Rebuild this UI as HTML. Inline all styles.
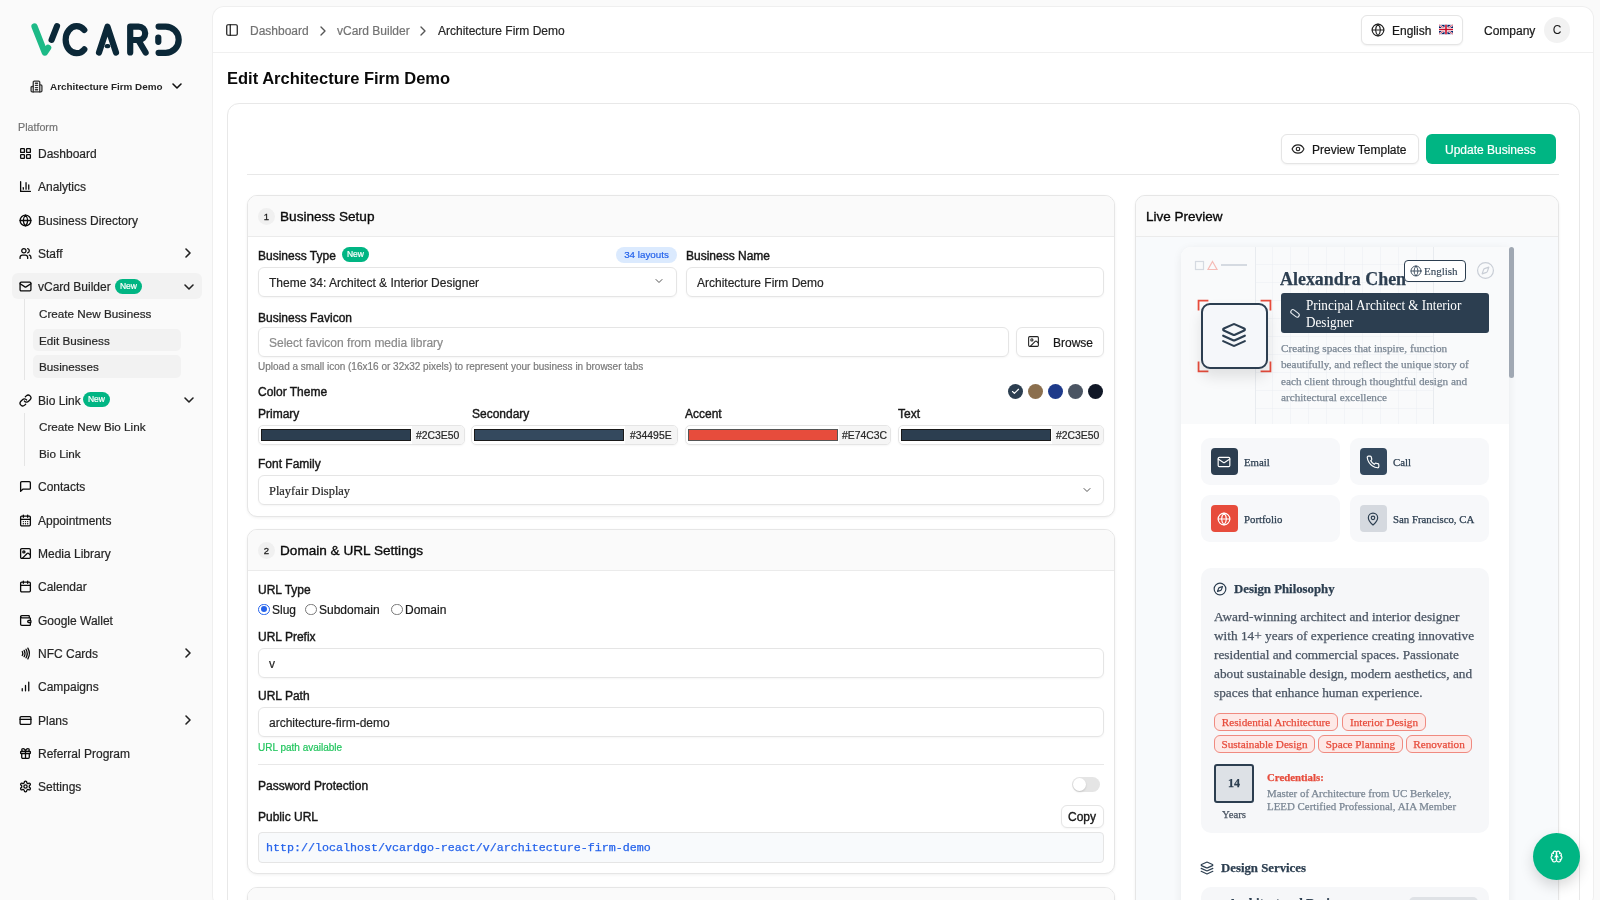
<!DOCTYPE html>
<html><head><meta charset="utf-8">
<style>
*{box-sizing:border-box;margin:0;padding:0}
html,body{width:1600px;height:900px;overflow:hidden;background:#fafafa;-webkit-font-smoothing:antialiased;font-family:"Liberation Sans",sans-serif;color:#0a0a0a}
.a{position:absolute}
.t{position:absolute;white-space:nowrap;line-height:20px;margin-top:1px;-webkit-text-stroke:0.2px currentColor}
svg.i{position:absolute;fill:none;stroke:currentColor;stroke-width:2;stroke-linecap:round;stroke-linejoin:round}
.side .t{font-size:12px;color:#262626;margin-top:1px}
.side svg.i{margin-top:0.2px;stroke-width:2.4}
.badge{position:absolute;background:#00b583;color:#fff;border-radius:8px;font-size:8.5px;line-height:15px;text-align:center;height:15px;-webkit-text-stroke:0.2px #fff}
.lbl{position:absolute;white-space:nowrap;line-height:20px;margin-top:1px;font-size:12px;color:#171717;-webkit-text-stroke:0.4px #171717}
.box{position:absolute;border:1px solid #e5e5e5;border-radius:6px;background:#fff;box-shadow:0 1px 2px rgba(0,0,0,.04)}
.sec{position:absolute;border:1px solid #e6e6e6;border-radius:10px;background:#fff;box-shadow:0 1px 3px rgba(0,0,0,.06);overflow:hidden}
.sech{position:absolute;left:0;top:0;right:0;background:#fafafa;border-bottom:1px solid #ebebeb}
.num{position:absolute;width:17px;height:17px;border-radius:9px;background:#f0f0f0;font-size:9.5px;line-height:17px;text-align:center;color:#222;-webkit-text-stroke:0.3px #222}
.sf{position:absolute;white-space:nowrap;font-family:"Liberation Serif",serif;-webkit-text-stroke:0.25px currentColor}
.cc{position:absolute;width:139px;height:47px;border-radius:9px;background:#f7f8fa}
.ci{position:absolute;width:26.5px;height:27px;border-radius:4px}
.tag{position:absolute;height:18px;border:1px solid #f08a80;border-radius:6px;background:#fde9e7;color:#e74c3c;font-family:"Liberation Serif",serif;font-size:11.2px;line-height:16px;text-align:center;white-space:nowrap;-webkit-text-stroke:0.25px currentColor}
</style></head><body>
<div style="position:absolute;left:0;top:0;width:1600px;height:900px;will-change:transform">
<!-- SIDEBAR -->
<div class="side">
  <svg class="a" style="left:28px;top:20px" width="158" height="40" viewBox="28 20 158 40">
    <g fill="none" stroke-linecap="round" stroke-linejoin="round" stroke-width="6.2">
      <path d="M34.5 26.5 L44.8 52.6 L48.2 47.8" stroke="#1dba87"/>
      <path d="M57 26.2 L51.6 39.8" stroke="#0b2838"/>
      <path d="M84.3 30 A11 13.5 0 1 0 84.3 49.4" stroke="#0b2838"/>
      <path d="M99 52.5 L107.5 26.8 L116 52.5" stroke="#0b2838"/>
      <path d="M106.8 46.2 H108.2" stroke="#0b2838" stroke-width="4.2"/>
      <path d="M130.2 52.5 V26.6 H138.5 A6.7 6.7 0 0 1 138.5 40 H133 M138.5 40.5 L145.6 52.5" stroke="#0b2838"/>
      <path d="M158.6 26.6 H165.7 A13 13.1 0 0 1 165.7 52.8 H158.6" stroke="#0b2838"/>
      <path d="M158.3 37.6 V41.8" stroke="#0b2838"/>
    </g>
  </svg>

  <svg class="i" style="left:30px;top:80px;color:#333;margin-top:0" width="13" height="13" viewBox="0 0 24 24"><path d="M6 22V4a2 2 0 0 1 2-2h8a2 2 0 0 1 2 2v18Z"/><path d="M6 12H4a2 2 0 0 0-2 2v6a2 2 0 0 0 2 2h2"/><path d="M18 9h2a2 2 0 0 1 2 2v9a2 2 0 0 1-2 2h-2"/><path d="M10 6h4M10 10h4M10 14h4M10 18h4"/></svg>
  <div class="t" style="left:50px;top:76px;font-size:9.9px;font-weight:700;color:#262626;-webkit-text-stroke:0">Architecture Firm Demo</div>
  <svg class="i" style="left:169px;top:77.8px;color:#111" width="16" height="16" viewBox="0 0 24 24"><path d="m6 9 6 6 6-6"/></svg>
  <div class="t" style="left:18px;top:116px;font-size:10.7px;color:#737373">Platform</div>

  <svg class="i" style="left:18.5px;top:147px" width="13" height="13" viewBox="0 0 24 24"><rect x="3" y="3" width="7" height="7" rx="1"/><rect x="14" y="3" width="7" height="7" rx="1"/><rect x="14" y="14" width="7" height="7" rx="1"/><rect x="3" y="14" width="7" height="7" rx="1"/></svg>
  <div class="t" style="left:38px;top:143px">Dashboard</div>

  <svg class="i" style="left:18.5px;top:180px" width="13" height="13" viewBox="0 0 24 24"><path d="M3 3v18h18"/><path d="M18 17V9"/><path d="M13 17V5"/><path d="M8 17v-3"/></svg>
  <div class="t" style="left:38px;top:176px">Analytics</div>

  <svg class="i" style="left:18.5px;top:214px" width="13" height="13" viewBox="0 0 24 24"><circle cx="12" cy="12" r="10"/><path d="M12 2a14.5 14.5 0 0 0 0 20 14.5 14.5 0 0 0 0-20"/><path d="M2 12h20"/></svg>
  <div class="t" style="left:38px;top:210px">Business Directory</div>

  <svg class="i" style="left:18.5px;top:247px" width="13" height="13" viewBox="0 0 24 24"><path d="M16 21v-2a4 4 0 0 0-4-4H6a4 4 0 0 0-4 4v2"/><circle cx="9" cy="7" r="4"/><path d="M22 21v-2a4 4 0 0 0-3-3.87"/><path d="M16 3.13a4 4 0 0 1 0 7.75"/></svg>
  <div class="t" style="left:38px;top:243px">Staff</div>
  <svg class="i" style="left:179.5px;top:245.3px;color:#222" width="16" height="16" viewBox="0 0 24 24"><path d="m9 18 6-6-6-6"/></svg>

  <div class="a" style="left:12px;top:273px;width:190px;height:26px;border-radius:6px;background:#f2f2f2"></div>
  <svg class="i" style="left:18.5px;top:280px" width="13" height="13" viewBox="0 0 24 24"><rect x="2" y="4" width="20" height="16" rx="2"/><path d="m22 7-8.97 5.7a1.94 1.94 0 0 1-2.06 0L2 7"/></svg>
  <div class="t" style="left:38px;top:276px">vCard Builder</div>
  <div class="badge" style="left:115px;top:279px;width:27px">New</div>
  <svg class="i" style="left:180.5px;top:278.8px;color:#222" width="16" height="16" viewBox="0 0 24 24"><path d="m6 9 6 6 6-6"/></svg>
  <div class="a" style="left:24px;top:299px;width:1px;height:81px;background:#e5e5e5"></div>
  <div class="t" style="left:39px;top:303px;font-size:11.7px">Create New Business</div>
  <div class="a" style="left:33px;top:329px;width:148px;height:22px;border-radius:5px;background:#f2f2f2"></div>
  <div class="t" style="left:39px;top:330px;font-size:11.7px">Edit Business</div>
  <div class="a" style="left:33px;top:355px;width:148px;height:23px;border-radius:5px;background:#f2f2f2"></div>
  <div class="t" style="left:39px;top:356px;font-size:11.7px">Businesses</div>

  <svg class="i" style="left:18.5px;top:394px" width="13" height="13" viewBox="0 0 24 24"><path d="M10 13a5 5 0 0 0 7.54.54l3-3a5 5 0 0 0-7.07-7.07l-1.72 1.71"/><path d="M14 11a5 5 0 0 0-7.54-.54l-3 3a5 5 0 0 0 7.07 7.07l1.71-1.71"/></svg>
  <div class="t" style="left:38px;top:390px">Bio Link</div>
  <div class="badge" style="left:83px;top:392px;width:27px">New</div>
  <svg class="i" style="left:180.5px;top:391.8px;color:#222" width="16" height="16" viewBox="0 0 24 24"><path d="m6 9 6 6 6-6"/></svg>
  <div class="a" style="left:24px;top:413px;width:1px;height:53px;background:#e5e5e5"></div>
  <div class="t" style="left:39px;top:416px;font-size:11.7px">Create New Bio Link</div>
  <div class="t" style="left:39px;top:443px;font-size:11.7px">Bio Link</div>

  <svg class="i" style="left:18.5px;top:480px" width="13" height="13" viewBox="0 0 24 24"><path d="M21 15a2 2 0 0 1-2 2H7l-4 4V5a2 2 0 0 1 2-2h14a2 2 0 0 1 2 2z"/></svg>
  <div class="t" style="left:38px;top:476px">Contacts</div>

  <svg class="i" style="left:18.5px;top:514px" width="13" height="13" viewBox="0 0 24 24"><rect x="3" y="4" width="18" height="18" rx="2"/><path d="M16 2v4M8 2v4M3 10h18M8 14h.01M12 14h.01M16 14h.01M8 18h.01M12 18h.01M16 18h.01"/></svg>
  <div class="t" style="left:38px;top:510px">Appointments</div>

  <svg class="i" style="left:18.5px;top:547px" width="13" height="13" viewBox="0 0 24 24"><rect x="3" y="3" width="18" height="18" rx="2"/><circle cx="9" cy="9" r="2"/><path d="m21 15-3.086-3.086a2 2 0 0 0-2.828 0L6 21"/></svg>
  <div class="t" style="left:38px;top:543px">Media Library</div>

  <svg class="i" style="left:18.5px;top:580px" width="13" height="13" viewBox="0 0 24 24"><rect x="3" y="4" width="18" height="18" rx="2"/><path d="M16 2v4M8 2v4M3 10h18"/></svg>
  <div class="t" style="left:38px;top:576px">Calendar</div>

  <svg class="i" style="left:18.5px;top:614px" width="13" height="13" viewBox="0 0 24 24"><path d="M19 7V4a1 1 0 0 0-1-1H5a2 2 0 0 0 0 4h15a1 1 0 0 1 1 1v4h-3a2 2 0 0 0 0 4h3a1 1 0 0 0 1-1v-2a1 1 0 0 0-1-1"/><path d="M3 5v14a2 2 0 0 0 2 2h15a1 1 0 0 0 1-1v-4"/></svg>
  <div class="t" style="left:38px;top:610px">Google Wallet</div>

  <svg class="i" style="left:18.5px;top:647px" width="13" height="13" viewBox="0 0 24 24"><path d="M6 8.32a7.43 7.43 0 0 1 0 7.36"/><path d="M9.46 6.21a11.76 11.76 0 0 1 0 11.58"/><path d="M12.91 4.1a15.91 15.91 0 0 1 .01 15.8"/><path d="M16.37 2a20.16 20.16 0 0 1 0 20"/></svg>
  <div class="t" style="left:38px;top:643px">NFC Cards</div>
  <svg class="i" style="left:179.5px;top:645.3px;color:#222" width="16" height="16" viewBox="0 0 24 24"><path d="m9 18 6-6-6-6"/></svg>

  <svg class="i" style="left:18.5px;top:680px" width="13" height="13" viewBox="0 0 24 24"><path d="M6 20v-4M12 20V10M18 20V4"/></svg>
  <div class="t" style="left:38px;top:676px">Campaigns</div>

  <svg class="i" style="left:18.5px;top:714px" width="13" height="13" viewBox="0 0 24 24"><rect x="2" y="5" width="20" height="14" rx="2"/><path d="M2 10h20"/></svg>
  <div class="t" style="left:38px;top:710px">Plans</div>
  <svg class="i" style="left:179.5px;top:712.3px;color:#222" width="16" height="16" viewBox="0 0 24 24"><path d="m9 18 6-6-6-6"/></svg>

  <svg class="i" style="left:18.5px;top:747px" width="13" height="13" viewBox="0 0 24 24"><rect x="3" y="8" width="18" height="4" rx="1"/><path d="M12 8v13"/><path d="M19 12v7a2 2 0 0 1-2 2H7a2 2 0 0 1-2-2v-7"/><path d="M7.5 8a2.5 2.5 0 0 1 0-5A4.8 8 0 0 1 12 8a4.8 8 0 0 1 4.5-5 2.5 2.5 0 0 1 0 5"/></svg>
  <div class="t" style="left:38px;top:743px">Referral Program</div>

  <svg class="i" style="left:18.5px;top:780px" width="13" height="13" viewBox="0 0 24 24"><path d="M12.22 2h-.44a2 2 0 0 0-2 2v.18a2 2 0 0 1-1 1.73l-.43.25a2 2 0 0 1-2 0l-.15-.08a2 2 0 0 0-2.73.73l-.22.38a2 2 0 0 0 .73 2.73l.15.1a2 2 0 0 1 1 1.72v.51a2 2 0 0 1-1 1.74l-.15.09a2 2 0 0 0-.73 2.73l.22.38a2 2 0 0 0 2.73.73l.15-.08a2 2 0 0 1 2 0l.43.25a2 2 0 0 1 1 1.73V20a2 2 0 0 0 2 2h.44a2 2 0 0 0 2-2v-.18a2 2 0 0 1 1-1.73l.43-.25a2 2 0 0 1 2 0l.15.08a2 2 0 0 0 2.73-.73l.22-.39a2 2 0 0 0-.73-2.73l-.15-.08a2 2 0 0 1-1-1.74v-.5a2 2 0 0 1 1-1.74l.15-.09a2 2 0 0 0 .73-2.73l-.22-.38a2 2 0 0 0-2.73-.73l-.15.08a2 2 0 0 1-2 0l-.43-.25a2 2 0 0 1-1-1.73V4a2 2 0 0 0-2-2z"/><circle cx="12" cy="12" r="3"/></svg>
  <div class="t" style="left:38px;top:776px">Settings</div>
</div>

<!-- MAIN PANEL -->
<div class="a" style="left:213px;top:7px;width:1380px;height:900px;background:#fff;border-radius:11px;box-shadow:0 0 0 1px #efefef,0 1px 2px rgba(0,0,0,.04)"></div>
<div class="a" style="left:213px;top:52px;width:1380px;height:1px;background:#f0f0f0"></div>
<svg class="i" style="left:224.5px;top:23px;color:#111" width="14" height="14" viewBox="0 0 24 24"><rect x="3" y="3" width="18" height="18" rx="2"/><path d="M9 3v18"/></svg>
<div class="t" style="left:250px;top:20px;font-size:12px;color:#737373">Dashboard</div>
<svg class="i" style="left:315px;top:22.5px;color:#555" width="16" height="16" viewBox="0 0 24 24"><path d="m9 18 6-6-6-6"/></svg>
<div class="t" style="left:337px;top:20px;font-size:12px;color:#737373">vCard Builder</div>
<svg class="i" style="left:415px;top:22.5px;color:#555" width="16" height="16" viewBox="0 0 24 24"><path d="m9 18 6-6-6-6"/></svg>
<div class="t" style="left:438px;top:20px;font-size:12px;color:#262626">Architecture Firm Demo</div>

<div class="a" style="left:1361px;top:15px;width:102px;height:30px;border:1px solid #e5e5e5;border-radius:6px;background:#fff;box-shadow:0 1px 2px rgba(0,0,0,.06)"></div>
<svg class="i" style="left:1371px;top:23px;color:#222" width="14" height="14" viewBox="0 0 24 24"><circle cx="12" cy="12" r="10"/><path d="M12 2a14.5 14.5 0 0 0 0 20 14.5 14.5 0 0 0 0-20"/><path d="M2 12h20"/></svg>
<div class="t" style="left:1392px;top:20px;font-size:12px;color:#171717">English</div>
<svg class="a" style="left:1439px;top:24px" width="14" height="11" viewBox="0 0 60 40"><rect width="60" height="40" fill="#012169"/><path d="M0 0L60 40M60 0L0 40" stroke="#fff" stroke-width="8"/><path d="M0 0L60 40M60 0L0 40" stroke="#C8102E" stroke-width="3"/><path d="M30 0V40M0 20H60" stroke="#fff" stroke-width="12"/><path d="M30 0V40M0 20H60" stroke="#C8102E" stroke-width="7"/></svg>
<div class="t" style="left:1484px;top:20px;font-size:12px;color:#171717">Company</div>
<div class="a" style="left:1544px;top:17px;width:26px;height:26px;border-radius:13px;background:#f2f2f2;font-size:12px;line-height:26px;text-align:center;color:#171717">C</div>

<div class="t" style="left:227px;top:65px;font-size:16.5px;font-weight:700;line-height:24px;color:#0a0a0a;-webkit-text-stroke:0">Edit Architecture Firm Demo</div>

<!-- OUTER CARD -->
<div class="a" style="left:227px;top:103px;width:1353px;height:820px;border:1px solid #e8e8e8;border-radius:12px;background:#fff"></div>
<div class="a" style="left:1281px;top:134px;width:138px;height:30px;border:1px solid #e5e5e5;border-radius:6px;background:#fff;box-shadow:0 1px 2px rgba(0,0,0,.05)"></div>
<svg class="i" style="left:1291px;top:142px;color:#222" width="14" height="14" viewBox="0 0 24 24"><path d="M2.062 12.348a1 1 0 0 1 0-.696 10.75 10.75 0 0 1 19.876 0 1 1 0 0 1 0 .696 10.75 10.75 0 0 1-19.876 0"/><circle cx="12" cy="12" r="3"/></svg>
<div class="t" style="left:1312px;top:139px;font-size:12px;color:#171717">Preview Template</div>
<div class="a" style="left:1426px;top:134px;width:130px;height:30px;border-radius:6px;background:#00b583"></div>
<div class="t" style="left:1445px;top:139px;font-size:12px;color:#fff">Update Business</div>
<div class="a" style="left:247px;top:174px;width:1312px;height:1px;background:#e8e8e8"></div>

<!-- SECTION 1 -->
<div class="sec" style="left:247px;top:195px;width:868px;height:322px"><div class="sech" style="height:41px"></div></div>
<div class="num" style="left:258px;top:208px">1</div>
<div class="t" style="left:280px;top:206px;font-size:13.6px;color:#0a0a0a;-webkit-text-stroke:0.35px #0a0a0a">Business Setup</div>

<div class="lbl" style="left:258px;top:245px">Business Type</div>
<div class="badge" style="left:342px;top:247px;width:27px">New</div>
<div class="a" style="left:616px;top:247px;width:61px;height:16px;border-radius:8px;background:#dbeafe;color:#2563eb;font-size:9.8px;line-height:16px;text-align:center;-webkit-text-stroke:0.2px #2563eb">34 layouts</div>
<div class="box" style="left:258px;top:267px;width:419px;height:30px"></div>
<div class="t" style="left:269px;top:272px;font-size:12px;color:#262626">Theme 34: Architect &amp; Interior Designer</div>
<svg class="i" style="left:653px;top:275px;color:#555" width="12" height="12" viewBox="0 0 24 24"><path d="m6 9 6 6 6-6"/></svg>

<div class="lbl" style="left:686px;top:245px">Business Name</div>
<div class="box" style="left:686px;top:267px;width:418px;height:30px"></div>
<div class="t" style="left:697px;top:272px;font-size:12px;color:#262626">Architecture Firm Demo</div>

<div class="lbl" style="left:258px;top:307px">Business Favicon</div>
<div class="box" style="left:258px;top:327px;width:751px;height:30px"></div>
<div class="t" style="left:269px;top:332px;font-size:12px;color:#8a8a8a">Select favicon from media library</div>
<div class="box" style="left:1016px;top:327px;width:88px;height:30px"></div>
<svg class="i" style="left:1027px;top:335px;color:#222" width="13" height="13" viewBox="0 0 24 24"><rect x="3" y="3" width="18" height="18" rx="2"/><circle cx="9" cy="9" r="2"/><path d="m21 15-3.086-3.086a2 2 0 0 0-2.828 0L6 21"/></svg>
<div class="t" style="left:1053px;top:332px;font-size:12px;color:#171717">Browse</div>
<div class="t" style="left:258px;top:356px;font-size:10px;color:#7a7a7a">Upload a small icon (16x16 or 32x32 pixels) to represent your business in browser tabs</div>

<div class="lbl" style="left:258px;top:381px">Color Theme</div>
<div class="a" style="left:1008px;top:384px;width:15px;height:15px;border-radius:8px;background:#2c3e50"></div>
<svg class="i" style="left:1011px;top:387px;color:#fff;stroke-width:3" width="9" height="9" viewBox="0 0 24 24"><path d="M20 6 9 17l-5-5"/></svg>
<div class="a" style="left:1028px;top:384px;width:15px;height:15px;border-radius:8px;background:#8b6f4e"></div>
<div class="a" style="left:1048px;top:384px;width:15px;height:15px;border-radius:8px;background:#1e3a8a"></div>
<div class="a" style="left:1068px;top:384px;width:15px;height:15px;border-radius:8px;background:#4b5563"></div>
<div class="a" style="left:1088px;top:384px;width:15px;height:15px;border-radius:8px;background:#111827"></div>

<div class="lbl" style="left:258px;top:403px">Primary</div>
<div class="lbl" style="left:472px;top:403px">Secondary</div>
<div class="lbl" style="left:685px;top:403px">Accent</div>
<div class="lbl" style="left:898px;top:403px">Text</div>

<div class="box" style="left:258px;top:425px;width:207px;height:20px;border-radius:5px;overflow:hidden"><div class="a" style="left:2px;top:3px;width:150px;height:12px;background:#2c3e50;border:1px solid #1a1a1a"></div><div class="a" style="left:153px;top:0;right:0;height:18px;background:#f5f5f5"></div></div>
<div class="t" style="left:416px;top:425px;font-size:10.4px;line-height:20px;color:#262626">#2C3E50</div>
<div class="box" style="left:471px;top:425px;width:207px;height:20px;border-radius:5px;overflow:hidden"><div class="a" style="left:2px;top:3px;width:150px;height:12px;background:#34495e;border:1px solid #1a1a1a"></div><div class="a" style="left:153px;top:0;right:0;height:18px;background:#f5f5f5"></div></div>
<div class="t" style="left:630px;top:425px;font-size:10.4px;line-height:20px;color:#262626">#34495E</div>
<div class="box" style="left:685px;top:425px;width:206px;height:20px;border-radius:5px;overflow:hidden"><div class="a" style="left:2px;top:3px;width:150px;height:12px;background:#e74c3c;border:1px solid #555"></div><div class="a" style="left:153px;top:0;right:0;height:18px;background:#f5f5f5"></div></div>
<div class="t" style="left:842px;top:425px;font-size:10.4px;line-height:20px;color:#262626">#E74C3C</div>
<div class="box" style="left:898px;top:425px;width:206px;height:20px;border-radius:5px;overflow:hidden"><div class="a" style="left:2px;top:3px;width:150px;height:12px;background:#2c3e50;border:1px solid #1a1a1a"></div><div class="a" style="left:153px;top:0;right:0;height:18px;background:#f5f5f5"></div></div>
<div class="t" style="left:1056px;top:425px;font-size:10.4px;line-height:20px;color:#262626">#2C3E50</div>

<div class="lbl" style="left:258px;top:453px">Font Family</div>
<div class="box" style="left:258px;top:475px;width:846px;height:30px"></div>
<div class="t" style="left:269px;top:480px;font-family:'Liberation Serif',serif;font-size:13.5px;color:#262626;transform:scaleX(0.92);transform-origin:0 0">Playfair Display</div>
<svg class="i" style="left:1080.5px;top:484px;color:#555" width="12" height="12" viewBox="0 0 24 24"><path d="m6 9 6 6 6-6"/></svg>

<!-- SECTION 2 -->
<div class="sec" style="left:247px;top:529px;width:868px;height:345px"><div class="sech" style="height:41px"></div></div>
<div class="num" style="left:258px;top:542px">2</div>
<div class="t" style="left:280px;top:540px;font-size:13.6px;color:#0a0a0a;-webkit-text-stroke:0.35px #0a0a0a">Domain &amp; URL Settings</div>

<div class="lbl" style="left:258px;top:579px">URL Type</div>
<div class="a" style="left:258px;top:603.5px;width:11.5px;height:11.5px;border-radius:6px;border:1px solid #2563eb;background:#fff"><div class="a" style="left:1.5px;top:1.5px;width:6px;height:6px;border-radius:3px;background:#2563eb"></div></div>
<div class="t" style="left:272px;top:599px;font-size:12px;color:#171717">Slug</div>
<div class="a" style="left:305px;top:603.5px;width:11.5px;height:11.5px;border-radius:6px;border:1px solid #767676;background:#fff"></div>
<div class="t" style="left:319px;top:599px;font-size:12px;color:#171717">Subdomain</div>
<div class="a" style="left:391px;top:603.5px;width:11.5px;height:11.5px;border-radius:6px;border:1px solid #767676;background:#fff"></div>
<div class="t" style="left:405px;top:599px;font-size:12px;color:#171717">Domain</div>

<div class="lbl" style="left:258px;top:626px">URL Prefix</div>
<div class="box" style="left:258px;top:648px;width:846px;height:30px"></div>
<div class="t" style="left:269px;top:653px;font-size:12px;color:#262626">v</div>

<div class="lbl" style="left:258px;top:685px">URL Path</div>
<div class="box" style="left:258px;top:707px;width:846px;height:30px"></div>
<div class="t" style="left:269px;top:712px;font-size:12px;color:#262626">architecture-firm-demo</div>
<div class="t" style="left:258px;top:737px;font-size:10px;color:#22c55e">URL path available</div>
<div class="a" style="left:258px;top:764px;width:846px;height:1px;background:#e8e8e8"></div>

<div class="lbl" style="left:258px;top:775px">Password Protection</div>
<div class="a" style="left:1072px;top:777px;width:28px;height:15px;border-radius:8px;background:#e5e5e5"><div class="a" style="left:1px;top:1px;width:13px;height:13px;border-radius:7px;background:#fff;box-shadow:0 1px 2px rgba(0,0,0,.15)"></div></div>

<div class="lbl" style="left:258px;top:806px">Public URL</div>
<div class="box" style="left:1061px;top:805px;width:43px;height:23px"></div>
<div class="t" style="left:1068px;top:806px;font-size:12px;color:#171717;-webkit-text-stroke:0.35px #171717">Copy</div>
<div class="a" style="left:258px;top:832px;width:846px;height:31px;border:1px solid #e5e5e5;border-radius:4px;background:#f8fafc"></div>
<div class="t" style="left:266px;top:837px;font-family:'Liberation Mono',monospace;font-size:11.67px;color:#2563eb;-webkit-text-stroke:0.25px #2563eb">http://localhost/vcardgo-react/v/architecture-firm-demo</div>

<div class="sec" style="left:247px;top:887px;width:868px;height:100px"><div class="sech" style="height:41px"></div></div>

<!-- LIVE PREVIEW -->
<div class="sec" style="left:1135px;top:195px;width:424px;height:760px;background:#f8fafc"><div class="sech" style="height:41px"></div></div>
<div class="t" style="left:1146px;top:206px;font-size:13.5px;color:#0a0a0a;-webkit-text-stroke:0.35px #0a0a0a">Live Preview</div>

<!-- phone card -->
<div class="a" style="left:1181px;top:247px;width:328px;height:700px;background:#fff;border-radius:10px 0 0 0;box-shadow:0 2px 10px rgba(0,0,0,.07)"></div>
<div class="a" style="left:1181px;top:247px;width:328px;height:177px;background:#f9fafb;border-radius:10px 0 0 0;overflow:hidden">
  <svg class="a" style="left:74px;top:0" width="179" height="177"><defs><pattern id="g" width="18" height="18" patternUnits="userSpaceOnUse" x="0" y="0"><path d="M18 0V18H0" fill="none" stroke="#ebeef2" stroke-width="1"/></pattern></defs><rect width="179" height="177" fill="url(#g)"/><path d="M0.5 0V177" stroke="#e8ebef"/><path d="M178.5 0V177" stroke="#e8ebef"/></svg>
</div>
<div class="a" style="left:1509px;top:247px;width:5px;height:131px;border-radius:3px;background:#a0a8b3"></div>

<svg class="a" style="left:1193px;top:259px" width="60" height="12" viewBox="0 0 60 12"><rect x="2.5" y="2.5" width="8" height="8" fill="none" stroke="#d5dae1" stroke-width="1.2"/><path d="M19.5 2.5 L24 10.5 H15 Z" fill="none" stroke="#f5bcb6" stroke-width="1.2"/><path d="M28 6 H54" stroke="#d5dae1" stroke-width="2"/></svg>

<!-- avatar -->
<svg class="a" style="left:1197px;top:299px" width="75" height="74" viewBox="0 0 75 74"><g fill="none" stroke="#e74c3c" stroke-width="1.8" transform="translate(37.5 37) scale(0.985) translate(-37.5 -37)"><path d="M1 11V1H11"/><path d="M64 1H74V11"/><path d="M1 63V73H11"/><path d="M64 73H74V63"/></g></svg>
<div class="a" style="left:1201px;top:303px;width:67px;height:66px;border:2px solid #2c3e50;border-radius:9px;background:#f5f7fa;box-shadow:0 8px 14px rgba(0,0,0,.10)"></div>
<svg class="i" style="left:1221px;top:322px;color:#2c3e50" width="26" height="26" viewBox="0 0 24 24"><path d="M12.83 2.18a2 2 0 0 0-1.66 0L2.6 6.08a1 1 0 0 0 0 1.83l8.58 3.91a2 2 0 0 0 1.66 0l8.58-3.9a1 1 0 0 0 0-1.83Z"/><path d="m22 17.65-9.17 4.16a2 2 0 0 1-1.66 0L2 17.65"/><path d="m22 12.65-9.17 4.16a2 2 0 0 1-1.66 0L2 12.65"/></svg>

<div class="sf" style="left:1280px;top:267px;font-size:19.5px;line-height:24px;font-weight:700;color:#2c3e50;transform:scaleX(0.92);transform-origin:0 0">Alexandra Chen</div>
<div class="a" style="left:1404px;top:260px;width:62px;height:22px;border:1.5px solid #2c3e50;border-radius:4px;background:#fff"></div>
<svg class="i" style="left:1410px;top:265px;color:#2c3e50;stroke-width:1.7" width="12" height="12" viewBox="0 0 24 24"><circle cx="12" cy="12" r="10"/><path d="M12 2a14.5 14.5 0 0 0 0 20 14.5 14.5 0 0 0 0-20"/><path d="M2 12h20"/></svg>
<div class="sf" style="left:1424px;top:263px;font-size:11px;line-height:16px;color:#2c3e50;-webkit-text-stroke:0.1px #2c3e50">English</div>
<svg class="i" style="left:1476px;top:261px;color:#c9ced6;stroke-width:1.5" width="19" height="19" viewBox="0 0 24 24"><circle cx="12" cy="12" r="10"/><path d="m16.24 7.76-1.804 5.411a2 2 0 0 1-1.265 1.265L7.76 16.24l1.804-5.411a2 2 0 0 1 1.265-1.265z"/></svg>

<div class="a" style="left:1281px;top:293px;width:208px;height:40px;border-radius:3px;background:#2c3e50"></div>
<svg class="a" style="left:1288px;top:307px" width="14" height="13" viewBox="0 0 14 13"><rect x="2.2" y="4.3" width="9.5" height="4.2" rx="2.1" fill="none" stroke="#e8ecf0" stroke-width="1.1" transform="rotate(38 7 6.5)"/></svg>
<div class="sf" style="left:1306px;top:298px;font-size:14px;line-height:16.5px;color:#fff;transform:scaleX(0.94);transform-origin:0 0;-webkit-text-stroke:0">Principal Architect &amp; Interior<br>Designer</div>

<div class="sf" style="left:1281px;top:340px;font-size:11.2px;line-height:16.3px;color:#7b8794">Creating spaces that inspire, function<br>beautifully, and reflect the unique story of<br>each client through thoughtful design and<br>architectural excellence</div>

<!-- contact cards -->
<div class="cc" style="left:1201px;top:438px"></div>
<div class="ci" style="left:1211px;top:448px;background:#2c3e50"></div>
<svg class="i" style="left:1217px;top:454.5px;color:#fff" width="14" height="14" viewBox="0 0 24 24"><rect x="2" y="4" width="20" height="16" rx="2"/><path d="m22 7-8.97 5.7a1.94 1.94 0 0 1-2.06 0L2 7"/></svg>
<div class="sf" style="left:1244px;top:454px;font-size:10.8px;line-height:16px;color:#2c3e50">Email</div>

<div class="cc" style="left:1350px;top:438px"></div>
<div class="ci" style="left:1360px;top:448px;background:#34495e"></div>
<svg class="i" style="left:1366px;top:454.5px;color:#fff" width="14" height="14" viewBox="0 0 24 24"><path d="M22 16.92v3a2 2 0 0 1-2.18 2 19.79 19.79 0 0 1-8.63-3.07 19.5 19.5 0 0 1-6-6 19.79 19.79 0 0 1-3.07-8.67A2 2 0 0 1 4.11 2h3a2 2 0 0 1 2 1.72 12.84 12.84 0 0 0 .7 2.81 2 2 0 0 1-.45 2.11L8.09 9.91a16 16 0 0 0 6 6l1.27-1.27a2 2 0 0 1 2.11-.45 12.84 12.84 0 0 0 2.81.7A2 2 0 0 1 22 16.92z"/></svg>
<div class="sf" style="left:1393px;top:454px;font-size:10.8px;line-height:16px;color:#2c3e50">Call</div>

<div class="cc" style="left:1201px;top:495px"></div>
<div class="ci" style="left:1211px;top:505px;background:#e74c3c"></div>
<svg class="i" style="left:1217px;top:511.5px;color:#fff" width="14" height="14" viewBox="0 0 24 24"><circle cx="12" cy="12" r="10"/><path d="M12 2a14.5 14.5 0 0 0 0 20 14.5 14.5 0 0 0 0-20"/><path d="M2 12h20"/></svg>
<div class="sf" style="left:1244px;top:511px;font-size:10.8px;line-height:16px;color:#2c3e50">Portfolio</div>

<div class="cc" style="left:1350px;top:495px"></div>
<div class="ci" style="left:1360px;top:505px;background:#d5d9df"></div>
<svg class="i" style="left:1366px;top:511.5px;color:#2c3e50" width="14" height="14" viewBox="0 0 24 24"><path d="M20 10c0 4.993-5.539 10.193-7.399 11.799a1 1 0 0 1-1.202 0C9.539 20.193 4 14.993 4 10a8 8 0 0 1 16 0"/><circle cx="12" cy="10" r="3"/></svg>
<div class="sf" style="left:1393px;top:511px;font-size:10.8px;line-height:16px;color:#2c3e50">San Francisco, CA</div>

<!-- design philosophy -->
<div class="a" style="left:1201px;top:568px;width:288px;height:265px;border-radius:10px;background:#f6f7f9"></div>
<svg class="i" style="left:1213px;top:582px;color:#2c3e50" width="14" height="14" viewBox="0 0 24 24"><circle cx="12" cy="12" r="10"/><path d="m16.24 7.76-1.804 5.411a2 2 0 0 1-1.265 1.265L7.76 16.24l1.804-5.411a2 2 0 0 1 1.265-1.265z"/></svg>
<div class="sf" style="left:1234px;top:580px;font-size:12.8px;line-height:18px;font-weight:700;color:#2c3e50">Design Philosophy</div>
<div class="sf" style="left:1214px;top:607px;font-size:13.3px;line-height:19px;color:#4a5563">Award-winning architect and interior designer<br>with 14+ years of experience creating innovative<br>residential and commercial spaces. Passionate<br>about sustainable design, modern aesthetics, and<br>spaces that enhance human experience.</div>

<div class="tag" style="left:1214px;top:713px;width:124px">Residential Architecture</div>
<div class="tag" style="left:1342px;top:713px;width:84px">Interior Design</div>
<div class="tag" style="left:1214px;top:735px;width:101px">Sustainable Design</div>
<div class="tag" style="left:1318px;top:735px;width:85px">Space Planning</div>
<div class="tag" style="left:1406px;top:735px;width:66px">Renovation</div>

<div class="a" style="left:1214px;top:764px;width:40px;height:39px;border:2px solid #2c3e50;border-radius:3px;background:#dde1e6"></div>
<div class="sf" style="left:1214px;top:775px;width:40px;text-align:center;font-size:12px;line-height:16px;font-weight:700;color:#2c3e50">14</div>
<div class="sf" style="left:1214px;top:806px;width:40px;text-align:center;font-size:10.8px;line-height:16px;color:#4a5563">Years</div>
<div class="sf" style="left:1267px;top:769px;font-size:10.8px;line-height:16px;font-weight:700;color:#e74c3c">Credentials:</div>
<div class="sf" style="left:1267px;top:787px;font-size:10.9px;line-height:13.4px;color:#7b8794">Master of Architecture from UC Berkeley,<br>LEED Certified Professional, AIA Member</div>

<svg class="i" style="left:1200px;top:861px;color:#2c3e50" width="14" height="14" viewBox="0 0 24 24"><path d="M12.83 2.18a2 2 0 0 0-1.66 0L2.6 6.08a1 1 0 0 0 0 1.83l8.58 3.91a2 2 0 0 0 1.66 0l8.58-3.9a1 1 0 0 0 0-1.83Z"/><path d="m22 17.65-9.17 4.16a2 2 0 0 1-1.66 0L2 17.65"/><path d="m22 12.65-9.17 4.16a2 2 0 0 1-1.66 0L2 12.65"/></svg>
<div class="sf" style="left:1221px;top:859px;font-size:12.8px;line-height:18px;font-weight:700;color:#2c3e50">Design Services</div>
<div class="a" style="left:1201px;top:887px;width:288px;height:60px;border-radius:10px;background:#f6f7f9"></div>
<div class="a" style="left:1409px;top:897px;width:69px;height:10px;border-radius:5px;background:#dfe2e6"></div>
<div class="sf" style="left:1228px;top:894px;font-size:13px;line-height:18px;font-weight:700;color:#2c3e50">Architectural Design</div>

<!-- floating button -->
<div class="a" style="left:1533px;top:833px;width:47px;height:47px;border-radius:24px;background:#00b583;box-shadow:0 6px 14px rgba(0,0,0,.15)"></div>
<svg class="i" style="left:1550px;top:850px;color:#fff;stroke-width:2.2" width="13" height="13" viewBox="0 0 24 24"><path d="M12 5a3 3 0 1 0-5.997.125 4 4 0 0 0-2.526 5.77 4 4 0 0 0 .556 6.588A4 4 0 1 0 12 18Z"/><path d="M12 5a3 3 0 1 1 5.997.125 4 4 0 0 1 2.526 5.77 4 4 0 0 1-.556 6.588A4 4 0 1 1 12 18Z"/><path d="M12 5v13"/><path d="M15 13a4.5 4.5 0 0 1-3-4 4.5 4.5 0 0 1-3 4"/><path d="M17.599 6.5a3 3 0 0 0 .399-1.375"/><path d="M6.003 5.125A3 3 0 0 0 6.401 6.5"/><path d="M3.477 10.896a4 4 0 0 1 .585-.396"/><path d="M19.938 10.5a4 4 0 0 1 .585.396"/><path d="M6 18a4 4 0 0 1-1.967-.516"/><path d="M19.967 17.484A4 4 0 0 1 18 18"/></svg>

</div>
</body></html>
